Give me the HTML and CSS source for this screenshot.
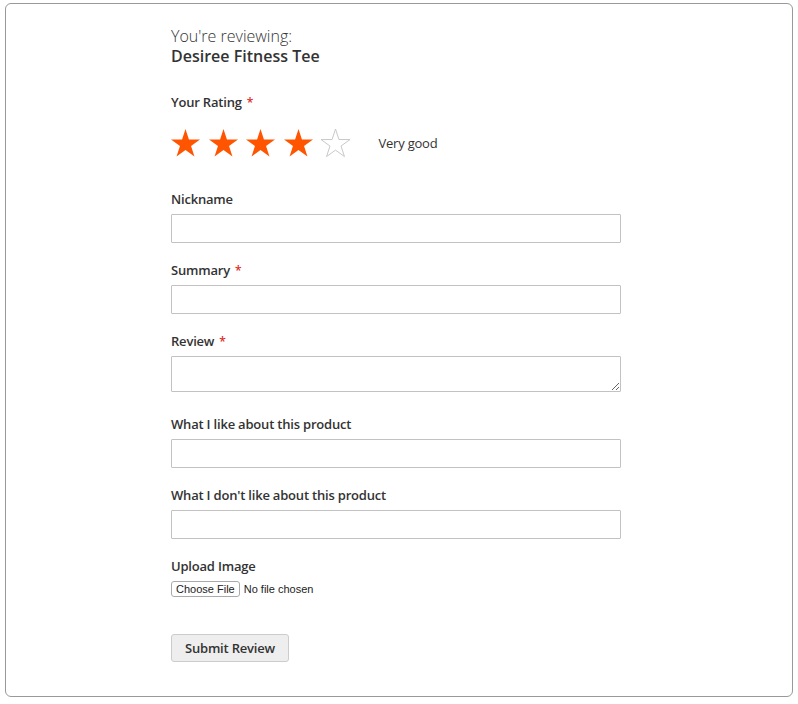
FILE: index.html
```html
<!DOCTYPE html>
<html lang="en">
<head>
    <meta charset="UTF-8">
    <meta name="viewport" content="width=device-width, initial-scale=1.0">
    <title>Write Your Own Review</title>
    <link rel="stylesheet" href="styles.css">
</head>
<body>
    <div class="frame">
        <form class="review-form">
            <div class="review-legend">
                <span>You're reviewing:</span>
                <strong>Desiree Fitness Tee</strong>
            </div>

            <div class="field rating-field">
                <span class="label required">Your Rating</span>
                <div class="rating">
                    <div class="stars">
                        <svg class="star filled" viewBox="0 0 29 28"><polygon points="14.5,0 17.93,10.53 29,10.54 20.04,17.05 23.46,27.59 14.5,21.08 5.54,27.59 8.96,17.05 0,10.54 11.07,10.53"/></svg>
                        <svg class="star filled" viewBox="0 0 29 28"><polygon points="14.5,0 17.93,10.53 29,10.54 20.04,17.05 23.46,27.59 14.5,21.08 5.54,27.59 8.96,17.05 0,10.54 11.07,10.53"/></svg>
                        <svg class="star filled" viewBox="0 0 29 28"><polygon points="14.5,0 17.93,10.53 29,10.54 20.04,17.05 23.46,27.59 14.5,21.08 5.54,27.59 8.96,17.05 0,10.54 11.07,10.53"/></svg>
                        <svg class="star filled" viewBox="0 0 29 28"><polygon points="14.5,0 17.93,10.53 29,10.54 20.04,17.05 23.46,27.59 14.5,21.08 5.54,27.59 8.96,17.05 0,10.54 11.07,10.53"/></svg>
                        <svg class="star empty" viewBox="0 0 29 28"><polygon points="14.5,0 17.93,10.53 29,10.54 20.04,17.05 23.46,27.59 14.5,21.08 5.54,27.59 8.96,17.05 0,10.54 11.07,10.53"/></svg>
                    </div>
                    <span class="rating-text">Very good</span>
                </div>
            </div>

            <div class="field">
                <label for="nickname">Nickname</label>
                <input type="text" id="nickname" name="nickname">
            </div>

            <div class="field">
                <label for="summary" class="required">Summary</label>
                <input type="text" id="summary" name="summary">
            </div>

            <div class="field">
                <label for="review" class="required">Review</label>
                <textarea id="review" name="review"></textarea>
            </div>

            <div class="field">
                <label for="like">What I like about this product</label>
                <input type="text" id="like" name="like">
            </div>

            <div class="field">
                <label for="dislike">What I don't like about this product</label>
                <input type="text" id="dislike" name="dislike">
            </div>

            <div class="field upload-field">
                <label for="image">Upload Image</label>
                <input type="file" id="image" name="image">
            </div>

            <button type="button" class="submit">Submit Review</button>
        </form>
    </div>
</body>
</html>
```

FILE: styles.css
```css
body {
    margin: 0;
    padding: 3px 5px 7px 5px;
    font-family: "Open Sans", "Liberation Sans", sans-serif;
    color: #333;
    background: #fff;
}

.frame {
    border: 1px solid #999;
    border-radius: 6px;
    padding: 22px 0 34px 165px;
}

.review-form {
    width: 450px;
}

.review-legend {
    display: flex;
    flex-direction: column;
    font-size: 16px;
    line-height: 20px;
    margin-bottom: 26px;
}

.review-legend span {
    font-weight: 300;
}

.review-legend strong {
    font-weight: 600;
}

.field {
    display: flex;
    flex-direction: column;
    align-items: flex-start;
    margin-bottom: 17px;
}

.field label,
.field .label {
    font-size: 13px;
    font-weight: 600;
    letter-spacing: -0.2px;
    line-height: 20px;
    margin-bottom: 5px;
}

.required::after {
    content: "*";
    color: #e02b27;
    font-size: 12px;
    line-height: 1;
    margin-left: 5px;
}

.rating-field {
    margin-bottom: 32px;
}

.rating-field .label {
    margin-bottom: 17px;
}

.rating {
    display: flex;
    align-items: center;
}

.stars {
    display: flex;
    gap: 8.6px;
}

.star {
    width: 29px;
    height: 28px;
    overflow: visible;
}

.star.filled {
    fill: #ff5501;
}

.star.empty {
    fill: #fff;
    stroke: #c9c9c9;
    stroke-width: 1;
}

.rating-text {
    margin-left: 28px;
    font-size: 13px;
    letter-spacing: -0.2px;
}

input[type="text"],
textarea {
    box-sizing: border-box;
    width: 450px;
    height: 29px;
    border: 1px solid #c2c2c2;
    border-radius: 1px;
    padding: 0 9px;
    font-family: inherit;
    font-size: 14px;
    margin: 0;
}

textarea {
    display: block;
    height: 36px;
    margin-bottom: 5px;
}

.upload-field {
    margin-bottom: 37px;
}

.upload-field label {
    margin-bottom: 5px;
}

input[type="file"] {
    font-family: "Liberation Sans", Arial, sans-serif;
    font-size: 11px;
    color: #222;
    margin: 0;
}

input[type="file"]::file-selector-button {
    font-family: "Liberation Sans", Arial, sans-serif;
    font-size: 11px;
    background: #fff;
    border: 1px solid #aaa;
    border-radius: 3px;
    padding: 1px 4px;
    margin-right: 4px;
    color: #222;
}

.submit {
    height: 28px;
    padding: 0 13px;
    background: #eee;
    border: 1px solid #ccc;
    border-radius: 3px;
    font-family: inherit;
    font-size: 13px;
    font-weight: 600;
    letter-spacing: -0.2px;
    color: #333;
    cursor: pointer;
}
```
